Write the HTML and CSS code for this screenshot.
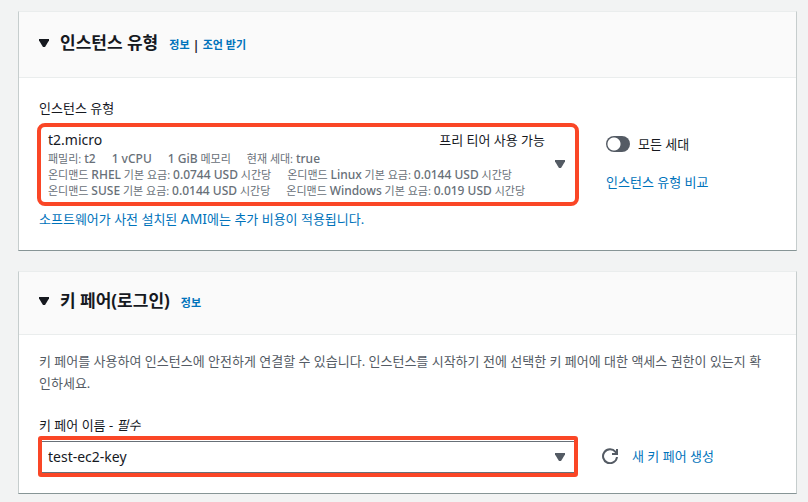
FILE: index.html
```
<!DOCTYPE html>
<html lang="ko">
<head>
<meta charset="utf-8">
<meta name="viewport" content="width=device-width, initial-scale=1">
<title>인스턴스 시작</title>
<link rel="stylesheet" href="styles.css">
</head>
<body>
<main class="page">
  <section class="card">
    <header class="card-header">
      <svg class="caret" viewBox="0 0 10 8" aria-hidden="true"><path d="M0 0h10v1.500L6 8H4L0 1.500z"/></svg>
      <h2 class="title">인스턴스 유형</h2>
      <div class="info"><a href="#">정보</a><span class="bar">|</span><a href="#">조언 받기</a></div>
    </header>
    <div class="card-body columns">
      <div class="field">
        <span class="label" id="type-label">인스턴스 유형</span>
        <button type="button" class="type-picker" aria-haspopup="listbox" aria-labelledby="type-label">
          <span class="picker-text">
            <span class="picker-head"><span class="value">t2.micro</span><span>프리 티어 사용 가능</span></span>
            <span class="specs"><span>패밀리: <span class="latin">t2</span></span><span class="latin">1 vCPU</span><span><span class="latin">1 GiB</span> 메모리</span><span>현재 세대: <span class="latin">true</span></span></span>
            <span class="specs"><span>온디맨드 <span class="latin">RHEL</span> 기본 요금: <span class="latin">0.0744 USD</span> 시간당</span><span>온디맨드 <span class="latin">Linux</span> 기본 요금: <span class="latin">0.0144 USD</span> 시간당</span></span>
            <span class="specs"><span>온디맨드 <span class="latin">SUSE</span> 기본 요금: <span class="latin">0.0144 USD</span> 시간당</span><span>온디맨드 <span class="latin">Windows</span> 기본 요금: <span class="latin">0.019 USD</span> 시간당</span></span>
          </span>
          <svg class="caret muted" viewBox="0 0 10 8" aria-hidden="true"><path d="M0 0h10v1.500L6 8H4L0 1.500z"/></svg>
        </button>
        <a class="note" href="#">소프트웨어가 사전 설치된 <span class="value">AMI</span>에는 추가 비용이 적용됩니다.</a>
      </div>
      <div class="side">
        <label class="toggle"><input type="checkbox" role="switch">모든 세대</label>
        <a href="#">인스턴스 유형 비교</a>
      </div>
    </div>
  </section>

  <section class="card">
    <header class="card-header compact">
      <svg class="caret" viewBox="0 0 10 8" aria-hidden="true"><path d="M0 0h10v1.500L6 8H4L0 1.500z"/></svg>
      <h2 class="title">키 페어(로그인)</h2>
      <div class="info"><a href="#">정보</a></div>
    </header>
    <div class="card-body key-body">
      <p class="description">키 페어를 사용하여 인스턴스에 안전하게 연결할 수 있습니다. 인스턴스를 시작하기 전에 선택한 키 페어에 대한 액세스 권한이 있는지 확인하세요.</p>
      <label class="label" for="key-name">키 페어 이름 - <i>필수</i></label>
      <div class="columns key-row">
        <div class="select-box">
          <select id="key-name"><option>test-ec2-key</option></select>
          <svg class="caret muted" viewBox="0 0 10 8" aria-hidden="true"><path d="M0 0h10v1.500L6 8H4L0 1.500z"/></svg>
        </div>
        <div class="actions">
          <button type="button" class="refresh" aria-label="새로 고침">
            <svg viewBox="0 0 16 16" aria-hidden="true"><path d="M15 9A7 7 0 1 1 13.500 3.800L15 5.500M10 6h5V1" fill="none" stroke="currentColor" stroke-width="2"/></svg>
          </button>
          <a href="#">새 키 페어 생성</a>
        </div>
      </div>
    </div>
  </section>
</main>
</body>
</html>
```
FILE: styles.css
```
* { box-sizing: border-box; }

body {
  margin: 0;
  background: #f2f3f3;
  color: #16191f;
  font: 13px/20px "Noto Sans", "Noto Sans CJK KR", sans-serif;
}

a { color: #0073bb; text-decoration: none; }

.page {
  display: flex;
  flex-direction: column;
  gap: 20px;
  padding: 11px 11px 8px 18px;
}

.card {
  background: #fff;
  border: 1px solid #c6cdcd;
  border-top-color: #eaeded;
  border-bottom-color: #879596;
}

.card-header {
  display: flex;
  align-items: center;
  min-height: 66px;
  padding: 0 20px 4px;
  background: #fafafa;
  border-bottom: 1px solid #eaeded;
}
.compact { min-height: 63px; }

.caret { width: 10px; height: 8px; flex: none; fill: #16191f; }
.muted { fill: #545b64; }

.title { margin: 0 11px; font-size: 17px; line-height: 24px; font-weight: 700; }

.info { display: flex; gap: 3px; font-size: 11px; font-weight: 700; line-height: 16px; padding-top: 4px; }
.bar { font-size: 13px; font-weight: 600; }

.card-body { padding: 20px 20px 21px; }

.columns {
  display: grid;
  grid-template-columns: minmax(0, 1fr) 170px;
  column-gap: 29px;
}

.field { display: flex; flex-direction: column; align-items: stretch; }
.label { display: block; }
.value { font-size: 14px; line-height: 18px; }

.type-picker {
  display: flex;
  align-items: center;
  margin: 5px -2px 3px;
  padding: 2px 10px 3px 7px;
  border: 4px solid #fa4626;
  border-radius: 8px;
  background: #fff;
  color: inherit;
  font: inherit;
  text-align: left;
}

.picker-text { flex: 1; min-width: 0; }
.picker-head { display: flex; align-items: baseline; justify-content: space-between; padding-right: 10px; line-height: 22px; }
.specs { display: flex; align-items: baseline; gap: 16px; color: #687078; font-size: 11px; line-height: 16px; white-space: nowrap; }
.latin { font-size: 12px; line-height: 14px; font-weight: 500; }

.side { display: flex; flex-direction: column; gap: 18px; padding-top: 36px; }
.toggle { display: flex; align-items: center; gap: 8px; }
.toggle input {
  appearance: none;
  width: 24px;
  height: 16px;
  margin: 0;
  border-radius: 8px;
  background: radial-gradient(circle at 8px 8px, #fff 6px, #545b64 7px);
}

.card-body.key-body { padding: 15px 20px 16px; }
.description { margin: 0 0 21px; padding-right: 8px; color: #545b64; line-height: 22px; }

.select-box {
  position: relative;
  display: flex;
  align-items: center;
  margin: 1px -1px 0;
  border: 4px solid #fa4626;
  border-radius: 3px;
  padding: 1px 0 0;
}
.select-box .caret { position: absolute; right: 9px; }
select {
  appearance: none;
  width: 100%;
  height: 32px;
  padding: 0 30px 0 6px;
  border: solid #687078;
  border-width: 1px 0;
  border-radius: 0;
  background: #fff;
  color: inherit;
  font: inherit;
  font-size: 14px;
}

.actions { display: flex; align-items: center; gap: 14px; margin-left: -4px; }
.refresh { display: flex; padding: 0; border: 0; background: none; color: #545b64; }
.refresh svg { width: 16px; height: 16px; }
```
